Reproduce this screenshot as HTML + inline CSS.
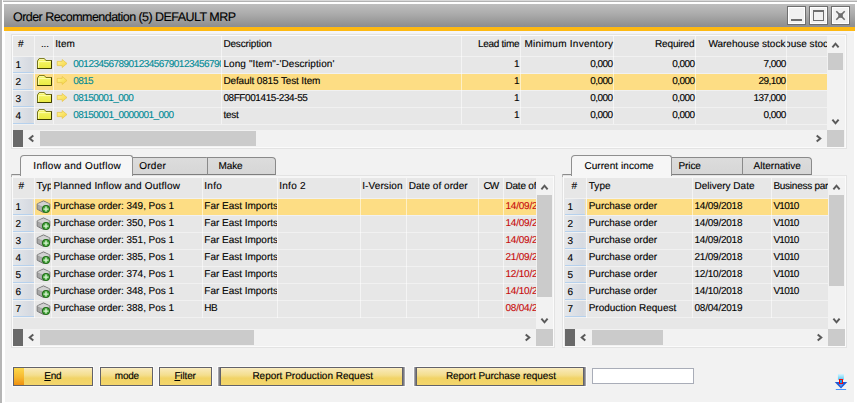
<!DOCTYPE html>
<html lang="en">
<head>
<meta charset="utf-8">
<title>Order Recommendation (5) DEFAULT MRP</title>
<style>
html,body{margin:0;padding:0;background:#fff}
body{width:857px;height:403px;position:relative;overflow:hidden;font-family:"Liberation Sans", sans-serif;font-size:10px;color:#000}
#w div,#w svg,#w span.t{position:absolute;display:block}
#w span.t{white-space:pre;text-rendering:geometricPrecision;-webkit-text-stroke:0.12px}
#w{position:absolute;left:0;top:0;width:857px;height:403px;overflow:hidden}
</style>
</head>
<body>
<div id="w">
<div style="left:0px;top:0px;width:857px;height:403px;background:#fff"></div>
<div style="left:3px;top:0px;width:854px;height:1px;background:#d9d9d9"></div>
<div style="left:3px;top:1px;width:854px;height:1px;background:#b2b2b2"></div>
<div style="left:0px;top:0px;width:2px;height:403px;background:#b5b5b5"></div>
<div style="left:4px;top:4px;width:851px;height:23px;background:linear-gradient(#bebebe,#adadad 40%,#8d8d8d)"></div>
<div style="left:4px;top:26px;width:851px;height:1px;background:#8a8e9a"></div>
<div style="left:4px;top:27px;width:851px;height:4px;background:#fdb913"></div>
<div style="left:5px;top:31px;width:849px;height:371px;background:#f2f2f2"></div>
<div style="left:5px;top:31px;width:849px;height:2px;background:#f5f5f9"></div>
<div style="left:787px;top:6px;width:19px;height:19px;box-sizing:border-box;border:1px solid #6e6e6e;background:#f1f1f1;box-shadow:inset 0 0 0 1px #fff"></div>
<div style="left:809px;top:6px;width:19px;height:19px;box-sizing:border-box;border:1px solid #6e6e6e;background:#f1f1f1;box-shadow:inset 0 0 0 1px #fff"></div>
<div style="left:831px;top:6px;width:19px;height:19px;box-sizing:border-box;border:1px solid #6e6e6e;background:#f1f1f1;box-shadow:inset 0 0 0 1px #fff"></div>
<div style="left:791px;top:19px;width:11px;height:2px;background:#6e6e6e"></div>
<div style="left:813px;top:10px;width:11px;height:11px;box-sizing:border-box;border:1px solid #6e6e6e;border-top-width:2px"></div>
<svg style="left:835px;top:10px" width="11" height="11" viewBox="0 0 11 11"><path d="M1.3 1.3 L9.7 9.7 M9.7 1.3 L1.3 9.7" stroke="#6e6e6e" stroke-width="1.6"/><rect x="3.3" y="3.3" width="4.5" height="4.5" fill="#6e6e6e"/></svg>
<div style="left:11px;top:34px;width:836px;height:115px;box-sizing:border-box;border:1px solid #e3e3e3;background:#fbfbfb"></div>
<div style="left:13px;top:36px;width:832px;height:111px;background:#e7e7e7"></div>
<div style="left:13px;top:56px;width:814px;height:1px;background:#f1f1f1"></div>
<div style="left:13px;top:73px;width:814px;height:1px;background:#f1f1f1"></div>
<div style="left:13px;top:90px;width:814px;height:1px;background:#f1f1f1"></div>
<div style="left:13px;top:107px;width:814px;height:1px;background:#f1f1f1"></div>
<div style="left:13px;top:124px;width:814px;height:1px;background:#f1f1f1"></div>
<div style="left:35px;top:74px;width:792px;height:16px;background:#fddd84"></div>
<div style="left:34px;top:36px;width:1px;height:88px;background:rgba(255,255,255,0.55)"></div>
<div style="left:53px;top:36px;width:1px;height:88px;background:rgba(255,255,255,0.55)"></div>
<div style="left:221px;top:36px;width:1px;height:88px;background:rgba(255,255,255,0.55)"></div>
<div style="left:461px;top:36px;width:1px;height:88px;background:rgba(255,255,255,0.55)"></div>
<div style="left:520px;top:36px;width:1px;height:88px;background:rgba(255,255,255,0.55)"></div>
<div style="left:613px;top:36px;width:1px;height:88px;background:rgba(255,255,255,0.55)"></div>
<div style="left:695px;top:36px;width:1px;height:88px;background:rgba(255,255,255,0.55)"></div>
<div style="left:786px;top:36px;width:1px;height:88px;background:rgba(255,255,255,0.55)"></div>
<div style="left:827px;top:36px;width:18px;height:94px;background:#f2f2f2"></div>
<div style="left:828px;top:53px;width:15px;height:17px;background:#cbcbcb"></div>
<svg style="left:831.0px;top:41.0px" width="9" height="8" viewBox="0 0 9 8"><polyline points="1.4,6.3 4.5,2.7 7.6,6.3" fill="none" stroke="#5a5a5a" stroke-width="2"/></svg>
<svg style="left:831.0px;top:117.5px" width="9" height="8" viewBox="0 0 9 8"><polyline points="1.4,1.7 4.5,5.3 7.6,1.7" fill="none" stroke="#5a5a5a" stroke-width="2"/></svg>
<div style="left:13px;top:130px;width:832px;height:17px;background:#f2f2f2"></div>
<div style="left:13px;top:130px;width:10px;height:17px;background:#696969"></div>
<div style="left:40px;top:131px;width:216px;height:15px;background:#cbcbcb"></div>
<div style="left:827px;top:130px;width:17px;height:17px;background:#cbcbcb"></div>
<svg style="left:27.0px;top:134.0px" width="8" height="9" viewBox="0 0 8 9"><polyline points="6.3,1.4 2.7,4.5 6.3,7.6" fill="none" stroke="#5a5a5a" stroke-width="2"/></svg>
<svg style="left:815.0px;top:134.0px" width="8" height="9" viewBox="0 0 8 9"><polyline points="1.7,1.4 5.3,4.5 1.7,7.6" fill="none" stroke="#5a5a5a" stroke-width="2"/></svg>
<div style="left:13px;top:57px;width:21px;height:16px;background:linear-gradient(90deg,#e4e7eb,#d6dae1 85%,#dbdfe4);border-bottom:1px solid #b6d1ed;box-sizing:border-box"></div>
<svg style="left:36px;top:57px" width="17" height="13" viewBox="0 0 17 13"><defs><linearGradient id="fg0" x1="0" y1="0" x2="0" y2="1"><stop offset="0" stop-color="#f8f86c"/><stop offset="1" stop-color="#eaea42"/></linearGradient></defs><path d="M1.5 11.5 V3.9 L3.1 1.6 H8.4 L9.9 3.5 H15.5 V11.5 Z" fill="url(#fg0)" stroke="#66660e" stroke-width="0.9" stroke-linejoin="round"/><path d="M1.2 11.5 H15.5 V3.4" fill="none" stroke="#3e3e00" stroke-width="1"/><path d="M2.5 4.6 H14.6 M2.6 4.6 V10.6" stroke="#ffffb4" stroke-width="0.9" fill="none"/><path d="M3.3 2.6 H8.2" stroke="#ffffc0" stroke-width="0.8"/></svg>
<svg style="left:56px;top:58px" width="12" height="11" viewBox="0 0 12 11"><defs><linearGradient id="ag0" x1="0" y1="0" x2="1" y2="1"><stop offset="0" stop-color="#fff694"/><stop offset="1" stop-color="#f5d23e"/></linearGradient></defs><path d="M1.2 3.4 H6.2 V1.5 L11 5.5 L6.2 9.5 V7.6 H1.2 Z" fill="url(#ag0)" stroke="#e8c444" stroke-width="0.7" stroke-linejoin="round"/></svg>
<div style="left:13px;top:74px;width:21px;height:16px;background:linear-gradient(90deg,#e4e7eb,#d6dae1 85%,#dbdfe4);border-bottom:1px solid #b6d1ed;box-sizing:border-box"></div>
<svg style="left:36px;top:74px" width="17" height="13" viewBox="0 0 17 13"><defs><linearGradient id="fg1" x1="0" y1="0" x2="0" y2="1"><stop offset="0" stop-color="#f8f86c"/><stop offset="1" stop-color="#eaea42"/></linearGradient></defs><path d="M1.5 11.5 V3.9 L3.1 1.6 H8.4 L9.9 3.5 H15.5 V11.5 Z" fill="url(#fg1)" stroke="#66660e" stroke-width="0.9" stroke-linejoin="round"/><path d="M1.2 11.5 H15.5 V3.4" fill="none" stroke="#3e3e00" stroke-width="1"/><path d="M2.5 4.6 H14.6 M2.6 4.6 V10.6" stroke="#ffffb4" stroke-width="0.9" fill="none"/><path d="M3.3 2.6 H8.2" stroke="#ffffc0" stroke-width="0.8"/></svg>
<svg style="left:56px;top:75px" width="12" height="11" viewBox="0 0 12 11"><defs><linearGradient id="ag1" x1="0" y1="0" x2="1" y2="1"><stop offset="0" stop-color="#fff694"/><stop offset="1" stop-color="#f5d23e"/></linearGradient></defs><path d="M1.2 3.4 H6.2 V1.5 L11 5.5 L6.2 9.5 V7.6 H1.2 Z" fill="url(#ag1)" stroke="#e8c444" stroke-width="0.7" stroke-linejoin="round"/></svg>
<div style="left:13px;top:91px;width:21px;height:16px;background:linear-gradient(90deg,#e4e7eb,#d6dae1 85%,#dbdfe4);border-bottom:1px solid #b6d1ed;box-sizing:border-box"></div>
<svg style="left:36px;top:91px" width="17" height="13" viewBox="0 0 17 13"><defs><linearGradient id="fg2" x1="0" y1="0" x2="0" y2="1"><stop offset="0" stop-color="#f8f86c"/><stop offset="1" stop-color="#eaea42"/></linearGradient></defs><path d="M1.5 11.5 V3.9 L3.1 1.6 H8.4 L9.9 3.5 H15.5 V11.5 Z" fill="url(#fg2)" stroke="#66660e" stroke-width="0.9" stroke-linejoin="round"/><path d="M1.2 11.5 H15.5 V3.4" fill="none" stroke="#3e3e00" stroke-width="1"/><path d="M2.5 4.6 H14.6 M2.6 4.6 V10.6" stroke="#ffffb4" stroke-width="0.9" fill="none"/><path d="M3.3 2.6 H8.2" stroke="#ffffc0" stroke-width="0.8"/></svg>
<svg style="left:56px;top:92px" width="12" height="11" viewBox="0 0 12 11"><defs><linearGradient id="ag2" x1="0" y1="0" x2="1" y2="1"><stop offset="0" stop-color="#fff694"/><stop offset="1" stop-color="#f5d23e"/></linearGradient></defs><path d="M1.2 3.4 H6.2 V1.5 L11 5.5 L6.2 9.5 V7.6 H1.2 Z" fill="url(#ag2)" stroke="#e8c444" stroke-width="0.7" stroke-linejoin="round"/></svg>
<div style="left:13px;top:108px;width:21px;height:16px;background:linear-gradient(90deg,#e4e7eb,#d6dae1 85%,#dbdfe4);border-bottom:1px solid #b6d1ed;box-sizing:border-box"></div>
<svg style="left:36px;top:108px" width="17" height="13" viewBox="0 0 17 13"><defs><linearGradient id="fg3" x1="0" y1="0" x2="0" y2="1"><stop offset="0" stop-color="#f8f86c"/><stop offset="1" stop-color="#eaea42"/></linearGradient></defs><path d="M1.5 11.5 V3.9 L3.1 1.6 H8.4 L9.9 3.5 H15.5 V11.5 Z" fill="url(#fg3)" stroke="#66660e" stroke-width="0.9" stroke-linejoin="round"/><path d="M1.2 11.5 H15.5 V3.4" fill="none" stroke="#3e3e00" stroke-width="1"/><path d="M2.5 4.6 H14.6 M2.6 4.6 V10.6" stroke="#ffffb4" stroke-width="0.9" fill="none"/><path d="M3.3 2.6 H8.2" stroke="#ffffc0" stroke-width="0.8"/></svg>
<svg style="left:56px;top:109px" width="12" height="11" viewBox="0 0 12 11"><defs><linearGradient id="ag3" x1="0" y1="0" x2="1" y2="1"><stop offset="0" stop-color="#fff694"/><stop offset="1" stop-color="#f5d23e"/></linearGradient></defs><path d="M1.2 3.4 H6.2 V1.5 L11 5.5 L6.2 9.5 V7.6 H1.2 Z" fill="url(#ag3)" stroke="#e8c444" stroke-width="0.7" stroke-linejoin="round"/></svg>
<div style="left:33px;top:74px;width:1px;height:16px;background:#f3e2b0"></div>
<div style="left:11px;top:174px;width:10px;height:1px;background:#8c8c8c"></div>
<div style="left:11px;top:175px;width:544px;height:173px;box-sizing:border-box;border:1px solid #e3e3e3;background:#fbfbfb"></div>
<div style="left:13px;top:177px;width:540px;height:169px;background:#e7e7e7"></div>
<div style="left:13px;top:176px;width:540px;height:2px;background:#f6f6f6"></div>
<div style="left:11px;top:174px;width:1px;height:3px;background:#b0b0b0"></div>
<div style="left:131px;top:157px;width:77px;height:18px;box-sizing:border-box;border:1px solid #8a8a8a;border-bottom-color:#7e7e7e;border-radius:0 2px 0 0;background:linear-gradient(#dcdcdc,#d6d6d6)"></div>
<div style="left:207px;top:157px;width:69px;height:18px;box-sizing:border-box;border:1px solid #8a8a8a;border-bottom-color:#7e7e7e;border-radius:0 4px 0 0;background:linear-gradient(#dcdcdc,#d6d6d6)"></div>
<div style="left:20px;top:155px;width:113px;height:21px;box-sizing:border-box;border:1px solid #8f8f8f;border-bottom:none;border-radius:4px 3px 0 0;background:#f6f6f6"></div>
<div style="left:13px;top:198px;width:523px;height:1px;background:#f1f1f1"></div>
<div style="left:13px;top:215px;width:523px;height:1px;background:#f1f1f1"></div>
<div style="left:13px;top:232px;width:523px;height:1px;background:#f1f1f1"></div>
<div style="left:13px;top:249px;width:523px;height:1px;background:#f1f1f1"></div>
<div style="left:13px;top:266px;width:523px;height:1px;background:#f1f1f1"></div>
<div style="left:13px;top:283px;width:523px;height:1px;background:#f1f1f1"></div>
<div style="left:13px;top:300px;width:523px;height:1px;background:#f1f1f1"></div>
<div style="left:13px;top:317px;width:523px;height:1px;background:#f1f1f1"></div>
<div style="left:35px;top:199px;width:501px;height:16px;background:#fddd84"></div>
<div style="left:34px;top:178px;width:1px;height:140px;background:rgba(255,255,255,0.55)"></div>
<div style="left:51px;top:178px;width:1px;height:140px;background:rgba(255,255,255,0.55)"></div>
<div style="left:202px;top:178px;width:1px;height:140px;background:rgba(255,255,255,0.55)"></div>
<div style="left:277px;top:178px;width:1px;height:140px;background:rgba(255,255,255,0.55)"></div>
<div style="left:360px;top:178px;width:1px;height:140px;background:rgba(255,255,255,0.55)"></div>
<div style="left:406px;top:178px;width:1px;height:140px;background:rgba(255,255,255,0.55)"></div>
<div style="left:478px;top:178px;width:1px;height:140px;background:rgba(255,255,255,0.55)"></div>
<div style="left:503px;top:178px;width:1px;height:140px;background:rgba(255,255,255,0.55)"></div>
<div style="left:536px;top:178px;width:17px;height:151px;background:#f2f2f2"></div>
<div style="left:537px;top:195px;width:15px;height:102px;background:#cbcbcb"></div>
<svg style="left:540.0px;top:183.0px" width="9" height="8" viewBox="0 0 9 8"><polyline points="1.4,6.3 4.5,2.7 7.6,6.3" fill="none" stroke="#5a5a5a" stroke-width="2"/></svg>
<svg style="left:540.0px;top:317.0px" width="9" height="8" viewBox="0 0 9 8"><polyline points="1.4,1.7 4.5,5.3 7.6,1.7" fill="none" stroke="#5a5a5a" stroke-width="2"/></svg>
<div style="left:13px;top:329px;width:540px;height:17px;background:#f2f2f2"></div>
<div style="left:13px;top:329px;width:10px;height:17px;background:#696969"></div>
<div style="left:40px;top:330px;width:214px;height:15px;background:#cbcbcb"></div>
<div style="left:536px;top:329px;width:17px;height:17px;background:#cbcbcb"></div>
<svg style="left:27.0px;top:333.0px" width="8" height="9" viewBox="0 0 8 9"><polyline points="6.3,1.4 2.7,4.5 6.3,7.6" fill="none" stroke="#5a5a5a" stroke-width="2"/></svg>
<svg style="left:524.0px;top:333.0px" width="8" height="9" viewBox="0 0 8 9"><polyline points="1.7,1.4 5.3,4.5 1.7,7.6" fill="none" stroke="#5a5a5a" stroke-width="2"/></svg>
<div style="left:13px;top:199px;width:21px;height:16px;background:linear-gradient(90deg,#e4e7eb,#d6dae1 85%,#dbdfe4);border-bottom:1px solid #b6d1ed;box-sizing:border-box"></div>
<svg style="left:36px;top:199px" width="16" height="15" viewBox="0 0 16 15"><path d="M7.5 1.9 L13.8 4.9 V10.2 L7.5 13.5 L1.2 10.2 V4.9 Z" fill="#a6a6a6" stroke="#767676" stroke-width="1"/><path d="M7.5 2.4 L13.3 5 L7.5 7.8 L1.7 5 Z" fill="#d2d2d2"/><path d="M7.5 7.8 V13 L1.7 9.9 V5 Z" fill="#9a9a9a"/><path d="M7.5 7.8 V13 L13.3 9.9 V5 Z" fill="#b4b4b4"/><path d="M1.7 5 L7.5 7.8 L13.3 5 M7.5 7.8 V13" stroke="#dadada" stroke-width="0.7" fill="none"/><path d="M3 6.6 V10.2 M4.6 7.4 V11 M6.1 8.2 V11.8" stroke="#c2c2c2" stroke-width="0.6" fill="none"/><circle cx="10" cy="10.1" r="4" fill="#1e6c16"/><circle cx="10" cy="10.1" r="3" fill="#48a83e"/><path d="M10 7.6 V12.6 M7.5 10.1 H12.5" stroke="#d6f1d0" stroke-width="1.4"/></svg>
<div style="left:13px;top:216px;width:21px;height:16px;background:linear-gradient(90deg,#e4e7eb,#d6dae1 85%,#dbdfe4);border-bottom:1px solid #b6d1ed;box-sizing:border-box"></div>
<svg style="left:36px;top:216px" width="16" height="15" viewBox="0 0 16 15"><path d="M7.5 1.9 L13.8 4.9 V10.2 L7.5 13.5 L1.2 10.2 V4.9 Z" fill="#a6a6a6" stroke="#767676" stroke-width="1"/><path d="M7.5 2.4 L13.3 5 L7.5 7.8 L1.7 5 Z" fill="#d2d2d2"/><path d="M7.5 7.8 V13 L1.7 9.9 V5 Z" fill="#9a9a9a"/><path d="M7.5 7.8 V13 L13.3 9.9 V5 Z" fill="#b4b4b4"/><path d="M1.7 5 L7.5 7.8 L13.3 5 M7.5 7.8 V13" stroke="#dadada" stroke-width="0.7" fill="none"/><path d="M3 6.6 V10.2 M4.6 7.4 V11 M6.1 8.2 V11.8" stroke="#c2c2c2" stroke-width="0.6" fill="none"/><circle cx="10" cy="10.1" r="4" fill="#1e6c16"/><circle cx="10" cy="10.1" r="3" fill="#48a83e"/><path d="M10 7.6 V12.6 M7.5 10.1 H12.5" stroke="#d6f1d0" stroke-width="1.4"/></svg>
<div style="left:13px;top:233px;width:21px;height:16px;background:linear-gradient(90deg,#e4e7eb,#d6dae1 85%,#dbdfe4);border-bottom:1px solid #b6d1ed;box-sizing:border-box"></div>
<svg style="left:36px;top:233px" width="16" height="15" viewBox="0 0 16 15"><path d="M7.5 1.9 L13.8 4.9 V10.2 L7.5 13.5 L1.2 10.2 V4.9 Z" fill="#a6a6a6" stroke="#767676" stroke-width="1"/><path d="M7.5 2.4 L13.3 5 L7.5 7.8 L1.7 5 Z" fill="#d2d2d2"/><path d="M7.5 7.8 V13 L1.7 9.9 V5 Z" fill="#9a9a9a"/><path d="M7.5 7.8 V13 L13.3 9.9 V5 Z" fill="#b4b4b4"/><path d="M1.7 5 L7.5 7.8 L13.3 5 M7.5 7.8 V13" stroke="#dadada" stroke-width="0.7" fill="none"/><path d="M3 6.6 V10.2 M4.6 7.4 V11 M6.1 8.2 V11.8" stroke="#c2c2c2" stroke-width="0.6" fill="none"/><circle cx="10" cy="10.1" r="4" fill="#1e6c16"/><circle cx="10" cy="10.1" r="3" fill="#48a83e"/><path d="M10 7.6 V12.6 M7.5 10.1 H12.5" stroke="#d6f1d0" stroke-width="1.4"/></svg>
<div style="left:13px;top:250px;width:21px;height:16px;background:linear-gradient(90deg,#e4e7eb,#d6dae1 85%,#dbdfe4);border-bottom:1px solid #b6d1ed;box-sizing:border-box"></div>
<svg style="left:36px;top:250px" width="16" height="15" viewBox="0 0 16 15"><path d="M7.5 1.9 L13.8 4.9 V10.2 L7.5 13.5 L1.2 10.2 V4.9 Z" fill="#a6a6a6" stroke="#767676" stroke-width="1"/><path d="M7.5 2.4 L13.3 5 L7.5 7.8 L1.7 5 Z" fill="#d2d2d2"/><path d="M7.5 7.8 V13 L1.7 9.9 V5 Z" fill="#9a9a9a"/><path d="M7.5 7.8 V13 L13.3 9.9 V5 Z" fill="#b4b4b4"/><path d="M1.7 5 L7.5 7.8 L13.3 5 M7.5 7.8 V13" stroke="#dadada" stroke-width="0.7" fill="none"/><path d="M3 6.6 V10.2 M4.6 7.4 V11 M6.1 8.2 V11.8" stroke="#c2c2c2" stroke-width="0.6" fill="none"/><circle cx="10" cy="10.1" r="4" fill="#1e6c16"/><circle cx="10" cy="10.1" r="3" fill="#48a83e"/><path d="M10 7.6 V12.6 M7.5 10.1 H12.5" stroke="#d6f1d0" stroke-width="1.4"/></svg>
<div style="left:13px;top:267px;width:21px;height:16px;background:linear-gradient(90deg,#e4e7eb,#d6dae1 85%,#dbdfe4);border-bottom:1px solid #b6d1ed;box-sizing:border-box"></div>
<svg style="left:36px;top:267px" width="16" height="15" viewBox="0 0 16 15"><path d="M7.5 1.9 L13.8 4.9 V10.2 L7.5 13.5 L1.2 10.2 V4.9 Z" fill="#a6a6a6" stroke="#767676" stroke-width="1"/><path d="M7.5 2.4 L13.3 5 L7.5 7.8 L1.7 5 Z" fill="#d2d2d2"/><path d="M7.5 7.8 V13 L1.7 9.9 V5 Z" fill="#9a9a9a"/><path d="M7.5 7.8 V13 L13.3 9.9 V5 Z" fill="#b4b4b4"/><path d="M1.7 5 L7.5 7.8 L13.3 5 M7.5 7.8 V13" stroke="#dadada" stroke-width="0.7" fill="none"/><path d="M3 6.6 V10.2 M4.6 7.4 V11 M6.1 8.2 V11.8" stroke="#c2c2c2" stroke-width="0.6" fill="none"/><circle cx="10" cy="10.1" r="4" fill="#1e6c16"/><circle cx="10" cy="10.1" r="3" fill="#48a83e"/><path d="M10 7.6 V12.6 M7.5 10.1 H12.5" stroke="#d6f1d0" stroke-width="1.4"/></svg>
<div style="left:13px;top:284px;width:21px;height:16px;background:linear-gradient(90deg,#e4e7eb,#d6dae1 85%,#dbdfe4);border-bottom:1px solid #b6d1ed;box-sizing:border-box"></div>
<svg style="left:36px;top:284px" width="16" height="15" viewBox="0 0 16 15"><path d="M7.5 1.9 L13.8 4.9 V10.2 L7.5 13.5 L1.2 10.2 V4.9 Z" fill="#a6a6a6" stroke="#767676" stroke-width="1"/><path d="M7.5 2.4 L13.3 5 L7.5 7.8 L1.7 5 Z" fill="#d2d2d2"/><path d="M7.5 7.8 V13 L1.7 9.9 V5 Z" fill="#9a9a9a"/><path d="M7.5 7.8 V13 L13.3 9.9 V5 Z" fill="#b4b4b4"/><path d="M1.7 5 L7.5 7.8 L13.3 5 M7.5 7.8 V13" stroke="#dadada" stroke-width="0.7" fill="none"/><path d="M3 6.6 V10.2 M4.6 7.4 V11 M6.1 8.2 V11.8" stroke="#c2c2c2" stroke-width="0.6" fill="none"/><circle cx="10" cy="10.1" r="4" fill="#1e6c16"/><circle cx="10" cy="10.1" r="3" fill="#48a83e"/><path d="M10 7.6 V12.6 M7.5 10.1 H12.5" stroke="#d6f1d0" stroke-width="1.4"/></svg>
<div style="left:13px;top:301px;width:21px;height:16px;background:linear-gradient(90deg,#e4e7eb,#d6dae1 85%,#dbdfe4);border-bottom:1px solid #b6d1ed;box-sizing:border-box"></div>
<svg style="left:36px;top:301px" width="16" height="15" viewBox="0 0 16 15"><path d="M7.5 1.9 L13.8 4.9 V10.2 L7.5 13.5 L1.2 10.2 V4.9 Z" fill="#a6a6a6" stroke="#767676" stroke-width="1"/><path d="M7.5 2.4 L13.3 5 L7.5 7.8 L1.7 5 Z" fill="#d2d2d2"/><path d="M7.5 7.8 V13 L1.7 9.9 V5 Z" fill="#9a9a9a"/><path d="M7.5 7.8 V13 L13.3 9.9 V5 Z" fill="#b4b4b4"/><path d="M1.7 5 L7.5 7.8 L13.3 5 M7.5 7.8 V13" stroke="#dadada" stroke-width="0.7" fill="none"/><path d="M3 6.6 V10.2 M4.6 7.4 V11 M6.1 8.2 V11.8" stroke="#c2c2c2" stroke-width="0.6" fill="none"/><circle cx="10" cy="10.1" r="4" fill="#1e6c16"/><circle cx="10" cy="10.1" r="3" fill="#48a83e"/><path d="M10 7.6 V12.6 M7.5 10.1 H12.5" stroke="#d6f1d0" stroke-width="1.4"/></svg>
<div style="left:33px;top:199px;width:1px;height:16px;background:#f3e2b0"></div>
<div style="left:562px;top:174px;width:10px;height:1px;background:#8c8c8c"></div>
<div style="left:562px;top:175px;width:285px;height:173px;box-sizing:border-box;border:1px solid #e3e3e3;background:#fbfbfb"></div>
<div style="left:564px;top:177px;width:281px;height:169px;background:#e7e7e7"></div>
<div style="left:564px;top:176px;width:281px;height:2px;background:#f6f6f6"></div>
<div style="left:562px;top:174px;width:1px;height:3px;background:#b0b0b0"></div>
<div style="left:670px;top:157px;width:73px;height:18px;box-sizing:border-box;border:1px solid #8a8a8a;border-bottom-color:#7e7e7e;border-radius:0 2px 0 0;background:linear-gradient(#dcdcdc,#d6d6d6)"></div>
<div style="left:742px;top:157px;width:70px;height:18px;box-sizing:border-box;border:1px solid #8a8a8a;border-bottom-color:#7e7e7e;border-radius:0 4px 0 0;background:linear-gradient(#dcdcdc,#d6d6d6)"></div>
<div style="left:571px;top:155px;width:101px;height:21px;box-sizing:border-box;border:1px solid #8f8f8f;border-bottom:none;border-radius:4px 3px 0 0;background:#f6f6f6"></div>
<div style="left:565px;top:198px;width:263px;height:1px;background:#f1f1f1"></div>
<div style="left:565px;top:215px;width:263px;height:1px;background:#f1f1f1"></div>
<div style="left:565px;top:232px;width:263px;height:1px;background:#f1f1f1"></div>
<div style="left:565px;top:249px;width:263px;height:1px;background:#f1f1f1"></div>
<div style="left:565px;top:266px;width:263px;height:1px;background:#f1f1f1"></div>
<div style="left:565px;top:283px;width:263px;height:1px;background:#f1f1f1"></div>
<div style="left:565px;top:300px;width:263px;height:1px;background:#f1f1f1"></div>
<div style="left:565px;top:317px;width:263px;height:1px;background:#f1f1f1"></div>
<div style="left:587px;top:199px;width:241px;height:16px;background:#fddd84"></div>
<div style="left:586px;top:178px;width:1px;height:140px;background:rgba(255,255,255,0.55)"></div>
<div style="left:692px;top:178px;width:1px;height:140px;background:rgba(255,255,255,0.55)"></div>
<div style="left:771px;top:178px;width:1px;height:140px;background:rgba(255,255,255,0.55)"></div>
<div style="left:828px;top:178px;width:17px;height:151px;background:#f2f2f2"></div>
<div style="left:829px;top:195px;width:15px;height:91px;background:#cbcbcb"></div>
<svg style="left:832.0px;top:183.0px" width="9" height="8" viewBox="0 0 9 8"><polyline points="1.4,6.3 4.5,2.7 7.6,6.3" fill="none" stroke="#5a5a5a" stroke-width="2"/></svg>
<svg style="left:832.0px;top:317.0px" width="9" height="8" viewBox="0 0 9 8"><polyline points="1.4,1.7 4.5,5.3 7.6,1.7" fill="none" stroke="#5a5a5a" stroke-width="2"/></svg>
<div style="left:565px;top:329px;width:280px;height:17px;background:#f2f2f2"></div>
<div style="left:565px;top:329px;width:10px;height:17px;background:#696969"></div>
<div style="left:592px;top:330px;width:71px;height:15px;background:#cbcbcb"></div>
<div style="left:828px;top:329px;width:17px;height:17px;background:#cbcbcb"></div>
<svg style="left:579.0px;top:333.0px" width="8" height="9" viewBox="0 0 8 9"><polyline points="6.3,1.4 2.7,4.5 6.3,7.6" fill="none" stroke="#5a5a5a" stroke-width="2"/></svg>
<svg style="left:816.0px;top:333.0px" width="8" height="9" viewBox="0 0 8 9"><polyline points="1.7,1.4 5.3,4.5 1.7,7.6" fill="none" stroke="#5a5a5a" stroke-width="2"/></svg>
<div style="left:565px;top:199px;width:21px;height:16px;background:linear-gradient(90deg,#e4e7eb,#d6dae1 85%,#dbdfe4);border-bottom:1px solid #b6d1ed;box-sizing:border-box"></div>
<div style="left:565px;top:216px;width:21px;height:16px;background:linear-gradient(90deg,#e4e7eb,#d6dae1 85%,#dbdfe4);border-bottom:1px solid #b6d1ed;box-sizing:border-box"></div>
<div style="left:565px;top:233px;width:21px;height:16px;background:linear-gradient(90deg,#e4e7eb,#d6dae1 85%,#dbdfe4);border-bottom:1px solid #b6d1ed;box-sizing:border-box"></div>
<div style="left:565px;top:250px;width:21px;height:16px;background:linear-gradient(90deg,#e4e7eb,#d6dae1 85%,#dbdfe4);border-bottom:1px solid #b6d1ed;box-sizing:border-box"></div>
<div style="left:565px;top:267px;width:21px;height:16px;background:linear-gradient(90deg,#e4e7eb,#d6dae1 85%,#dbdfe4);border-bottom:1px solid #b6d1ed;box-sizing:border-box"></div>
<div style="left:565px;top:284px;width:21px;height:16px;background:linear-gradient(90deg,#e4e7eb,#d6dae1 85%,#dbdfe4);border-bottom:1px solid #b6d1ed;box-sizing:border-box"></div>
<div style="left:565px;top:301px;width:21px;height:16px;background:linear-gradient(90deg,#e4e7eb,#d6dae1 85%,#dbdfe4);border-bottom:1px solid #b6d1ed;box-sizing:border-box"></div>
<div style="left:585px;top:199px;width:1px;height:16px;background:#f3e2b0"></div>
<div style="left:13px;top:367px;width:80px;height:19px;box-sizing:border-box;border:1px solid #62626a;background:linear-gradient(#fdf0c4,#f8e8b4 8%,#f4de8e 42%,#f1d366 60%,#f4d66c);box-shadow:0 0 0 1px rgba(255,255,255,.6)"></div>
<div style="left:14px;top:368px;width:10px;height:17px;background:linear-gradient(#fdd84a,#f6b830 55%,#f0900f)"></div>
<div style="left:100px;top:367px;width:53px;height:19px;box-sizing:border-box;border:1px solid #62626a;background:linear-gradient(#fdf0c4,#f8e8b4 8%,#f4de8e 42%,#f1d366 60%,#f4d66c);box-shadow:0 0 0 1px rgba(255,255,255,.6)"></div>
<div style="left:159px;top:367px;width:53px;height:19px;box-sizing:border-box;border:1px solid #62626a;background:linear-gradient(#fdf0c4,#f8e8b4 8%,#f4de8e 42%,#f1d366 60%,#f4d66c);box-shadow:0 0 0 1px rgba(255,255,255,.6)"></div>
<div style="left:218px;top:367px;width:187px;height:19px;box-sizing:border-box;border:1px solid #62626a;background:linear-gradient(#fdf0c4,#f8e8b4 8%,#f4de8e 42%,#f1d366 60%,#f4d66c);border-left:none;border-right:none;box-shadow:0 0 0 1px rgba(255,255,255,.6)"></div>
<div style="left:218px;top:367px;width:3px;height:19px;background:linear-gradient(90deg,#b9b9bd,#7c7c84 50%,#54545e)"></div>
<div style="left:402px;top:367px;width:3px;height:19px;background:linear-gradient(270deg,#b9b9bd,#7c7c84 50%,#54545e)"></div>
<div style="left:414px;top:367px;width:172px;height:19px;box-sizing:border-box;border:1px solid #62626a;background:linear-gradient(#fdf0c4,#f8e8b4 8%,#f4de8e 42%,#f1d366 60%,#f4d66c);border-left:none;border-right:none;box-shadow:0 0 0 1px rgba(255,255,255,.6)"></div>
<div style="left:414px;top:367px;width:3px;height:19px;background:linear-gradient(90deg,#b9b9bd,#7c7c84 50%,#54545e)"></div>
<div style="left:583px;top:367px;width:3px;height:19px;background:linear-gradient(270deg,#b9b9bd,#7c7c84 50%,#54545e)"></div>
<div style="left:592px;top:368px;width:102px;height:16px;box-sizing:border-box;border:1px solid #a9adb8;background:#fff"></div>
<svg style="left:834px;top:373px" width="14" height="18" viewBox="0 0 14 18"><defs><linearGradient id="ig" x1="0" y1="0" x2="0" y2="1"><stop offset="0" stop-color="#d8f6ff"/><stop offset="1" stop-color="#56c6f2"/></linearGradient></defs><rect x="3.9" y="0.9" width="6" height="6" fill="url(#ig)"/><path d="M0.7 8.9 H13.3 L7 15.6 Z" fill="#1f5ad6"/><path d="M4.6 10.5 H9.4 L7 14 Z" fill="#5c93ee"/><rect x="5.5" y="6.5" width="3" height="4" fill="#18a2f0" stroke="#f20a0a" stroke-width="1"/><rect x="1.8" y="16" width="10.3" height="1" fill="#4a94fa"/></svg>
<span class="t" style="left:13.00px;top:10.17px;line-height:15px;font-size:12.5px;letter-spacing:-0.542px;">Order Recommendation (5) DEFAULT MRP</span>
<span class="t" style="left:18.00px;top:38.53px;line-height:12px;font-size:10px;">#</span>
<span class="t" style="left:41.00px;top:38.53px;line-height:12px;font-size:10px;letter-spacing:-0.172px;">...</span>
<span class="t" style="left:55.30px;top:38.53px;line-height:12px;font-size:10px;letter-spacing:0.016px;">Item</span>
<span class="t" style="left:223.40px;top:38.53px;line-height:12px;font-size:10px;letter-spacing:-0.153px;">Description</span>
<span class="t" style="left:478.10px;top:38.53px;line-height:12px;font-size:10px;letter-spacing:-0.303px;">Lead time</span>
<span class="t" style="left:524.40px;top:38.53px;line-height:12px;font-size:10px;letter-spacing:0.258px;">Minimum Inventory</span>
<span class="t" style="left:655.00px;top:38.53px;line-height:12px;font-size:10px;letter-spacing:-0.156px;">Required</span>
<span class="t" style="left:708.40px;top:38.53px;line-height:12px;font-size:10px;letter-spacing:0.008px;">Warehouse stock</span>
<div style="left:787px;top:38.53px;width:40px;height:12px;overflow:hidden"><span class="t" style="left:-31.00px;top:0;line-height:12px;font-size:10px;letter-spacing:0.008px;">Warehouse stock</span></div>
<span class="t" style="left:15.50px;top:59.53px;line-height:12px;font-size:10px;">1</span>
<div style="left:54px;top:58.53px;width:167px;height:12px;overflow:hidden"><span class="t" style="left:19.30px;top:0;line-height:12px;font-size:10px;letter-spacing:-0.535px;color:#008a96;">0012345678901234567901234567901234567890</span></div>
<span class="t" style="left:223.40px;top:58.53px;line-height:12px;font-size:10px;letter-spacing:0.094px;">Long "Item"-'Description'</span>
<span class="t" style="left:514.04px;top:58.53px;line-height:12px;font-size:10px;">1</span>
<span class="t" style="left:590.20px;top:58.53px;line-height:12px;font-size:10px;letter-spacing:-0.508px;">0,000</span>
<span class="t" style="left:672.20px;top:58.53px;line-height:12px;font-size:10px;letter-spacing:-0.508px;">0,000</span>
<span class="t" style="left:763.50px;top:58.53px;line-height:12px;font-size:10px;letter-spacing:-0.583px;">7,000</span>
<span class="t" style="left:15.50px;top:76.53px;line-height:12px;font-size:10px;">2</span>
<div style="left:54px;top:75.53px;width:167px;height:12px;overflow:hidden"><span class="t" style="left:19.30px;top:0;line-height:12px;font-size:10px;letter-spacing:-0.697px;color:#008a96;">0815</span></div>
<span class="t" style="left:223.40px;top:75.53px;line-height:12px;font-size:10px;letter-spacing:-0.137px;">Default 0815 Test Item</span>
<span class="t" style="left:514.04px;top:75.53px;line-height:12px;font-size:10px;">1</span>
<span class="t" style="left:590.20px;top:75.53px;line-height:12px;font-size:10px;letter-spacing:-0.508px;">0,000</span>
<span class="t" style="left:672.20px;top:75.53px;line-height:12px;font-size:10px;letter-spacing:-0.508px;">0,000</span>
<span class="t" style="left:758.46px;top:75.53px;line-height:12px;font-size:10px;letter-spacing:-0.571px;">29,100</span>
<span class="t" style="left:15.50px;top:93.53px;line-height:12px;font-size:10px;">3</span>
<div style="left:54px;top:92.53px;width:167px;height:12px;overflow:hidden"><span class="t" style="left:19.30px;top:0;line-height:12px;font-size:10px;letter-spacing:-0.57px;color:#008a96;">08150001_000</span></div>
<span class="t" style="left:223.40px;top:92.53px;line-height:12px;font-size:10px;letter-spacing:-0.418px;">08FF001415-234-55</span>
<span class="t" style="left:514.04px;top:92.53px;line-height:12px;font-size:10px;">1</span>
<span class="t" style="left:590.20px;top:92.53px;line-height:12px;font-size:10px;letter-spacing:-0.508px;">0,000</span>
<span class="t" style="left:672.20px;top:92.53px;line-height:12px;font-size:10px;letter-spacing:-0.508px;">0,000</span>
<span class="t" style="left:753.42px;top:92.53px;line-height:12px;font-size:10px;letter-spacing:-0.563px;">137,000</span>
<span class="t" style="left:15.50px;top:110.53px;line-height:12px;font-size:10px;">4</span>
<div style="left:54px;top:109.53px;width:167px;height:12px;overflow:hidden"><span class="t" style="left:19.30px;top:0;line-height:12px;font-size:10px;letter-spacing:-0.549px;color:#008a96;">08150001_0000001_000</span></div>
<span class="t" style="left:223.40px;top:109.53px;line-height:12px;font-size:10px;letter-spacing:-0.208px;">test</span>
<span class="t" style="left:514.04px;top:109.53px;line-height:12px;font-size:10px;">1</span>
<span class="t" style="left:590.20px;top:109.53px;line-height:12px;font-size:10px;letter-spacing:-0.508px;">0,000</span>
<span class="t" style="left:672.20px;top:109.53px;line-height:12px;font-size:10px;letter-spacing:-0.508px;">0,000</span>
<span class="t" style="left:763.50px;top:109.53px;line-height:12px;font-size:10px;letter-spacing:-0.583px;">0,000</span>
<span class="t" style="left:139.30px;top:160.53px;line-height:12px;font-size:10px;letter-spacing:0.234px;">Order</span>
<span class="t" style="left:218.60px;top:160.53px;line-height:12px;font-size:10px;letter-spacing:-0.151px;">Make</span>
<span class="t" style="left:33.30px;top:160.53px;line-height:12px;font-size:10px;letter-spacing:0.308px;">Inflow and Outflow</span>
<span class="t" style="left:18.50px;top:180.53px;line-height:12px;font-size:10px;">#</span>
<div style="left:35px;top:180.53px;width:16px;height:12px;overflow:hidden"><span class="t" style="left:1.50px;top:0;line-height:12px;font-size:10px;">Type</span></div>
<span class="t" style="left:53.40px;top:180.53px;line-height:12px;font-size:10px;letter-spacing:0.19px;">Planned Inflow and Outflow</span>
<span class="t" style="left:204.30px;top:180.53px;line-height:12px;font-size:10px;letter-spacing:0.271px;">Info</span>
<span class="t" style="left:279.20px;top:180.53px;line-height:12px;font-size:10px;letter-spacing:0.294px;">Info 2</span>
<span class="t" style="left:362.20px;top:180.53px;line-height:12px;font-size:10px;letter-spacing:0.104px;">I-Version</span>
<span class="t" style="left:408.70px;top:180.53px;line-height:12px;font-size:10px;letter-spacing:0.052px;">Date of order</span>
<span class="t" style="left:483.60px;top:180.53px;line-height:12px;font-size:10px;letter-spacing:-0.972px;">CW</span>
<div style="left:504px;top:180.53px;width:32px;height:12px;overflow:hidden"><span class="t" style="left:1.50px;top:0;line-height:12px;font-size:10px;letter-spacing:-0.208px;">Date of</span></div>
<span class="t" style="left:15.50px;top:201.53px;line-height:12px;font-size:10px;">1</span>
<span class="t" style="left:53.40px;top:200.53px;line-height:12px;font-size:10px;letter-spacing:-0.046px;">Purchase order: 349, Pos 1</span>
<div style="left:203px;top:200.53px;width:74px;height:12px;overflow:hidden"><span class="t" style="left:1.30px;top:0;line-height:12px;font-size:10px;letter-spacing:-0.014px;">Far East Imports</span></div>
<div style="left:504px;top:200.53px;width:32px;height:12px;overflow:hidden"><span class="t" style="left:1.50px;top:0;line-height:12px;font-size:10px;letter-spacing:-0.229px;color:#c80c0c;">14/09/2018</span></div>
<span class="t" style="left:15.50px;top:218.53px;line-height:12px;font-size:10px;">2</span>
<span class="t" style="left:53.40px;top:217.53px;line-height:12px;font-size:10px;letter-spacing:-0.046px;">Purchase order: 350, Pos 1</span>
<div style="left:203px;top:217.53px;width:74px;height:12px;overflow:hidden"><span class="t" style="left:1.30px;top:0;line-height:12px;font-size:10px;letter-spacing:-0.014px;">Far East Imports</span></div>
<div style="left:504px;top:217.53px;width:32px;height:12px;overflow:hidden"><span class="t" style="left:1.50px;top:0;line-height:12px;font-size:10px;letter-spacing:-0.229px;color:#c80c0c;">14/09/2018</span></div>
<span class="t" style="left:15.50px;top:235.53px;line-height:12px;font-size:10px;">3</span>
<span class="t" style="left:53.40px;top:234.53px;line-height:12px;font-size:10px;letter-spacing:-0.046px;">Purchase order: 351, Pos 1</span>
<div style="left:203px;top:234.53px;width:74px;height:12px;overflow:hidden"><span class="t" style="left:1.30px;top:0;line-height:12px;font-size:10px;letter-spacing:-0.014px;">Far East Imports</span></div>
<div style="left:504px;top:234.53px;width:32px;height:12px;overflow:hidden"><span class="t" style="left:1.50px;top:0;line-height:12px;font-size:10px;letter-spacing:-0.229px;color:#c80c0c;">14/09/2018</span></div>
<span class="t" style="left:15.50px;top:252.53px;line-height:12px;font-size:10px;">4</span>
<span class="t" style="left:53.40px;top:251.53px;line-height:12px;font-size:10px;letter-spacing:-0.046px;">Purchase order: 385, Pos 1</span>
<div style="left:203px;top:251.53px;width:74px;height:12px;overflow:hidden"><span class="t" style="left:1.30px;top:0;line-height:12px;font-size:10px;letter-spacing:-0.014px;">Far East Imports</span></div>
<div style="left:504px;top:251.53px;width:32px;height:12px;overflow:hidden"><span class="t" style="left:1.50px;top:0;line-height:12px;font-size:10px;letter-spacing:-0.229px;color:#c80c0c;">21/09/2018</span></div>
<span class="t" style="left:15.50px;top:269.54px;line-height:12px;font-size:10px;">5</span>
<span class="t" style="left:53.40px;top:268.54px;line-height:12px;font-size:10px;letter-spacing:-0.046px;">Purchase order: 374, Pos 1</span>
<div style="left:203px;top:268.54px;width:74px;height:12px;overflow:hidden"><span class="t" style="left:1.30px;top:0;line-height:12px;font-size:10px;letter-spacing:-0.014px;">Far East Imports</span></div>
<div style="left:504px;top:268.54px;width:32px;height:12px;overflow:hidden"><span class="t" style="left:1.50px;top:0;line-height:12px;font-size:10px;letter-spacing:-0.229px;color:#c80c0c;">12/10/2018</span></div>
<span class="t" style="left:15.50px;top:286.54px;line-height:12px;font-size:10px;">6</span>
<span class="t" style="left:53.40px;top:285.54px;line-height:12px;font-size:10px;letter-spacing:-0.046px;">Purchase order: 348, Pos 1</span>
<div style="left:203px;top:285.54px;width:74px;height:12px;overflow:hidden"><span class="t" style="left:1.30px;top:0;line-height:12px;font-size:10px;letter-spacing:-0.014px;">Far East Imports</span></div>
<div style="left:504px;top:285.54px;width:32px;height:12px;overflow:hidden"><span class="t" style="left:1.50px;top:0;line-height:12px;font-size:10px;letter-spacing:-0.229px;color:#c80c0c;">14/10/2018</span></div>
<span class="t" style="left:15.50px;top:303.54px;line-height:12px;font-size:10px;">7</span>
<span class="t" style="left:53.40px;top:302.54px;line-height:12px;font-size:10px;letter-spacing:-0.046px;">Purchase order: 388, Pos 1</span>
<div style="left:203px;top:302.54px;width:74px;height:12px;overflow:hidden"><span class="t" style="left:1.30px;top:0;line-height:12px;font-size:10px;letter-spacing:-0.406px;">HB</span></div>
<div style="left:504px;top:302.54px;width:32px;height:12px;overflow:hidden"><span class="t" style="left:1.50px;top:0;line-height:12px;font-size:10px;letter-spacing:-0.229px;color:#c80c0c;">08/04/2019</span></div>
<span class="t" style="left:678.40px;top:160.53px;line-height:12px;font-size:10px;letter-spacing:-0.074px;">Price</span>
<span class="t" style="left:753.60px;top:160.53px;line-height:12px;font-size:10px;letter-spacing:-0.005px;">Alternative</span>
<span class="t" style="left:584.40px;top:160.53px;line-height:12px;font-size:10px;letter-spacing:0.065px;">Current income</span>
<span class="t" style="left:571.50px;top:180.53px;line-height:12px;font-size:10px;">#</span>
<span class="t" style="left:588.70px;top:180.53px;line-height:12px;font-size:10px;letter-spacing:0.104px;">Type</span>
<span class="t" style="left:694.50px;top:180.53px;line-height:12px;font-size:10px;letter-spacing:-0.003px;">Delivery Date</span>
<div style="left:772px;top:180.53px;width:56px;height:12px;overflow:hidden"><span class="t" style="left:1.40px;top:0;line-height:12px;font-size:10px;letter-spacing:-0.256px;">Business partner</span></div>
<span class="t" style="left:567.50px;top:201.53px;line-height:12px;font-size:10px;">1</span>
<span class="t" style="left:588.70px;top:200.53px;line-height:12px;font-size:10px;letter-spacing:0.01px;">Purchase order</span>
<span class="t" style="left:694.50px;top:200.53px;line-height:12px;font-size:10px;letter-spacing:-0.229px;">14/09/2018</span>
<span class="t" style="left:773.40px;top:200.53px;line-height:12px;font-size:10px;letter-spacing:-0.73px;">V1010</span>
<span class="t" style="left:567.50px;top:218.53px;line-height:12px;font-size:10px;">2</span>
<span class="t" style="left:588.70px;top:217.53px;line-height:12px;font-size:10px;letter-spacing:0.01px;">Purchase order</span>
<span class="t" style="left:694.50px;top:217.53px;line-height:12px;font-size:10px;letter-spacing:-0.229px;">14/09/2018</span>
<span class="t" style="left:773.40px;top:217.53px;line-height:12px;font-size:10px;letter-spacing:-0.73px;">V1010</span>
<span class="t" style="left:567.50px;top:235.53px;line-height:12px;font-size:10px;">3</span>
<span class="t" style="left:588.70px;top:234.53px;line-height:12px;font-size:10px;letter-spacing:0.01px;">Purchase order</span>
<span class="t" style="left:694.50px;top:234.53px;line-height:12px;font-size:10px;letter-spacing:-0.229px;">14/09/2018</span>
<span class="t" style="left:773.40px;top:234.53px;line-height:12px;font-size:10px;letter-spacing:-0.73px;">V1010</span>
<span class="t" style="left:567.50px;top:252.53px;line-height:12px;font-size:10px;">4</span>
<span class="t" style="left:588.70px;top:251.53px;line-height:12px;font-size:10px;letter-spacing:0.01px;">Purchase order</span>
<span class="t" style="left:694.50px;top:251.53px;line-height:12px;font-size:10px;letter-spacing:-0.229px;">21/09/2018</span>
<span class="t" style="left:773.40px;top:251.53px;line-height:12px;font-size:10px;letter-spacing:-0.73px;">V1010</span>
<span class="t" style="left:567.50px;top:269.54px;line-height:12px;font-size:10px;">5</span>
<span class="t" style="left:588.70px;top:268.54px;line-height:12px;font-size:10px;letter-spacing:0.01px;">Purchase order</span>
<span class="t" style="left:694.50px;top:268.54px;line-height:12px;font-size:10px;letter-spacing:-0.229px;">12/10/2018</span>
<span class="t" style="left:773.40px;top:268.54px;line-height:12px;font-size:10px;letter-spacing:-0.73px;">V1010</span>
<span class="t" style="left:567.50px;top:286.54px;line-height:12px;font-size:10px;">6</span>
<span class="t" style="left:588.70px;top:285.54px;line-height:12px;font-size:10px;letter-spacing:0.01px;">Purchase order</span>
<span class="t" style="left:694.50px;top:285.54px;line-height:12px;font-size:10px;letter-spacing:-0.229px;">14/10/2018</span>
<span class="t" style="left:773.40px;top:285.54px;line-height:12px;font-size:10px;letter-spacing:-0.73px;">V1010</span>
<span class="t" style="left:567.50px;top:303.54px;line-height:12px;font-size:10px;">7</span>
<span class="t" style="left:588.70px;top:302.54px;line-height:12px;font-size:10px;letter-spacing:-0.02px;">Production Request</span>
<span class="t" style="left:694.50px;top:302.54px;line-height:12px;font-size:10px;letter-spacing:-0.229px;">08/04/2019</span>
<span class="t" style="left:44.30px;top:370.54px;line-height:12px;font-size:10px;letter-spacing:-0.248px;"><span style="text-decoration:underline">E</span>nd</span>
<span class="t" style="left:114.80px;top:370.54px;line-height:12px;font-size:10px;letter-spacing:-0.239px;">mode</span>
<span class="t" style="left:174.40px;top:370.54px;line-height:12px;font-size:10px;letter-spacing:-0.147px;"><span style="text-decoration:underline">F</span>ilter</span>
<span class="t" style="left:252.40px;top:370.54px;line-height:12px;font-size:10px;letter-spacing:-0.001px;">Report Production Request</span>
<span class="t" style="left:445.90px;top:370.54px;line-height:12px;font-size:10px;letter-spacing:-0.044px;">Report Purchase request</span>
</div>
</body>
</html>
